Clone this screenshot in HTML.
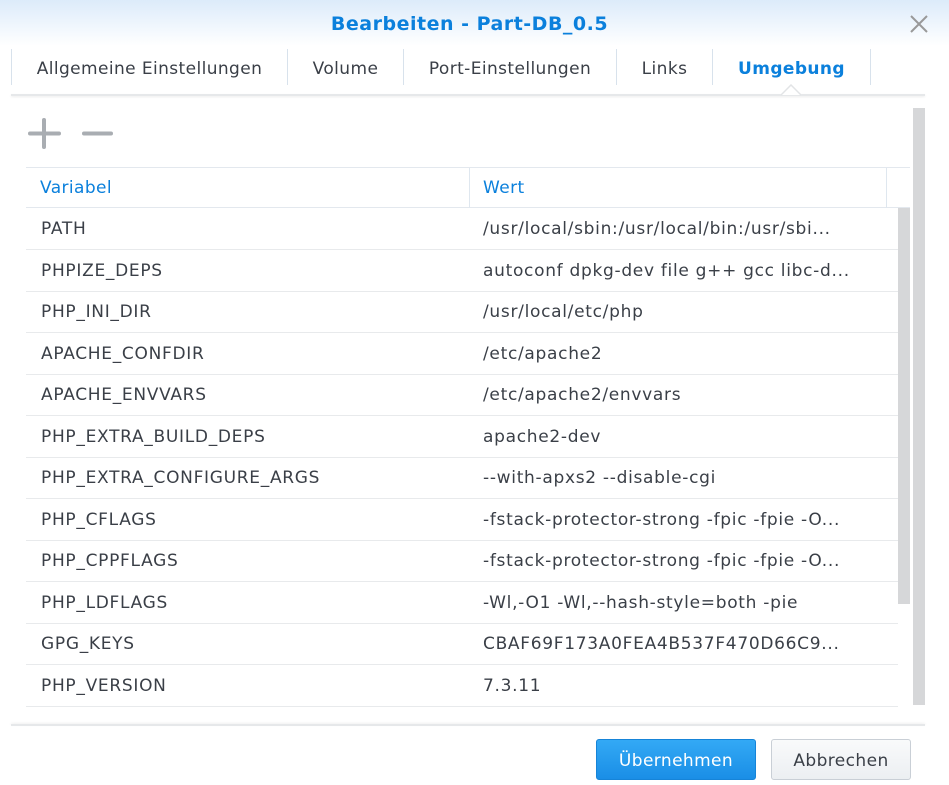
<!DOCTYPE html>
<html><head><meta charset="utf-8"><style>
*{margin:0;padding:0;box-sizing:border-box}
body{width:949px;height:785px;background:#fff;font-family:"DejaVu Sans","Liberation Sans",sans-serif;position:relative;overflow:hidden;color:#3a3f47}
.hdr{position:absolute;left:0;top:0;width:949px;height:46px;background:linear-gradient(#dcebfa,#fff)}
.title{position:absolute;left:0;width:939px;top:13px;text-align:center;font-weight:bold;font-size:19px;letter-spacing:0.5px;color:#0b80dc}
.close{position:absolute;left:908px;top:13px}
.tab{position:absolute;top:49px;height:38px;line-height:40px;font-size:17px;letter-spacing:0.4px;text-align:center;white-space:nowrap}
.sep{position:absolute;top:49px;width:1px;height:36px;background:#d8e2ec}
.tline{position:absolute;left:11px;top:94px;width:914px;height:2px;background:#e6e8ea;box-shadow:0 1px 2px rgba(0,0,0,.08)}
.row{position:absolute;left:26px;width:872px;height:42px;border-bottom:1px solid #e8eaec;font-size:17px;letter-spacing:0.7px}
.row span{position:absolute;top:11px;white-space:nowrap}
.a{left:15px}.b{left:457px}
</style></head><body>
<div class="hdr"></div>
<div class="title">Bearbeiten - Part-DB_0.5</div>
<svg class="close" width="22" height="22"><path d="M3 3L19 19M19 3L3 19" stroke="#999" stroke-width="2"/></svg>
<div class="sep" style="left:11px"></div>
<div class="tab" style="left:12px;width:275px">Allgemeine Einstellungen</div>
<div class="sep" style="left:287px"></div>
<div class="tab" style="left:288px;width:115px">Volume</div>
<div class="sep" style="left:403px"></div>
<div class="tab" style="left:404px;width:212px">Port-Einstellungen</div>
<div class="sep" style="left:616px"></div>
<div class="tab" style="left:617px;width:95px">Links</div>
<div class="sep" style="left:712px"></div>
<div class="tab" style="left:713px;width:157px;color:#0b80dc;font-weight:bold">Umgebung</div>
<div class="sep" style="left:870px"></div>
<div class="tline"></div>
<svg style="position:absolute;left:781px;top:84px" width="20" height="12"><path d="M0 11L10 1L20 11" fill="#fff" stroke="#e2e4e6" stroke-width="1.5"/></svg>
<svg style="position:absolute;left:28px;top:117px" width="90" height="34"><path d="M16 3V30M2 16.5H31" stroke="#a9adb2" stroke-width="4" stroke-linecap="round"/><path d="M56 16.5H83" stroke="#a9adb2" stroke-width="4" stroke-linecap="round"/></svg>
<div style="position:absolute;left:913px;top:108px;width:12px;height:597px;background:#d6d7d9"></div>
<div style="position:absolute;left:898px;top:207px;width:12px;height:397px;background:#d6d7d9"></div>
<div style="position:absolute;left:26px;top:167px;width:884px;height:41px;border-top:1px solid #e3e8ee;border-bottom:1px solid #e3e8ee;font-size:17px;letter-spacing:0.4px;color:#0b80dc">
<span style="position:absolute;left:14px;top:10px">Variabel</span>
<div style="position:absolute;left:443px;top:0;width:1px;height:40px;background:#dfe7ef"></div>
<span style="position:absolute;left:457px;top:10px">Wert</span>
<div style="position:absolute;left:860px;top:0;width:1px;height:40px;background:#dfe7ef"></div>
</div>
<div class="row" style="top:208px"><span class="a">PATH</span><span class="b">/usr/local/sbin:/usr/local/bin:/usr/sbi...</span></div>
<div class="row" style="top:249.5px"><span class="a">PHPIZE_DEPS</span><span class="b">autoconf dpkg-dev file g++ gcc libc-d...</span></div>
<div class="row" style="top:291px"><span class="a">PHP_INI_DIR</span><span class="b">/usr/local/etc/php</span></div>
<div class="row" style="top:332.5px"><span class="a">APACHE_CONFDIR</span><span class="b">/etc/apache2</span></div>
<div class="row" style="top:374px"><span class="a">APACHE_ENVVARS</span><span class="b">/etc/apache2/envvars</span></div>
<div class="row" style="top:415.5px"><span class="a">PHP_EXTRA_BUILD_DEPS</span><span class="b">apache2-dev</span></div>
<div class="row" style="top:457px"><span class="a">PHP_EXTRA_CONFIGURE_ARGS</span><span class="b">--with-apxs2 --disable-cgi</span></div>
<div class="row" style="top:498.5px"><span class="a">PHP_CFLAGS</span><span class="b">-fstack-protector-strong -fpic -fpie -O...</span></div>
<div class="row" style="top:540px"><span class="a">PHP_CPPFLAGS</span><span class="b">-fstack-protector-strong -fpic -fpie -O...</span></div>
<div class="row" style="top:581.5px"><span class="a">PHP_LDFLAGS</span><span class="b">-Wl,-O1 -Wl,--hash-style=both -pie</span></div>
<div class="row" style="top:623px"><span class="a">GPG_KEYS</span><span class="b">CBAF69F173A0FEA4B537F470D66C9...</span></div>
<div class="row" style="top:664.5px"><span class="a">PHP_VERSION</span><span class="b">7.3.11</span></div>
<div style="position:absolute;left:11px;top:724px;width:914px;height:2px;background:#e6e8ea;box-shadow:0 -1px 2px rgba(0,0,0,.06)"></div>
<div style="position:absolute;left:596px;top:739px;width:160px;height:41px;border-radius:3px;background:linear-gradient(#33a9f5,#1a8ee6);border:1px solid #1684d8;color:#fff;font-size:17px;letter-spacing:0.4px;text-align:center;line-height:42px">Übernehmen</div>
<div style="position:absolute;left:771px;top:739px;width:140px;height:41px;border-radius:3px;background:linear-gradient(#f9fafb,#eceff2);border:1px solid #c9cfd6;color:#3a3f47;font-size:17px;letter-spacing:0.4px;text-align:center;line-height:42px">Abbrechen</div>
</body></html>
